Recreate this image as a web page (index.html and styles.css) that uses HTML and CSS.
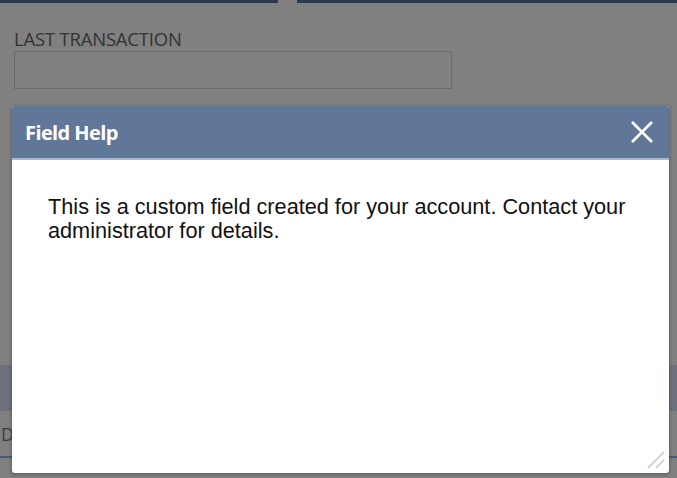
FILE: index.html
```html
<!DOCTYPE html>
<html lang="en">
<head>
    <meta charset="UTF-8">
    <meta name="viewport" content="width=device-width, initial-scale=1.0">
    <title>Field Help</title>
    <link rel="stylesheet" href="styles.css">
</head>
<body>
    <div class="page">
        <div class="tabs">
            <div class="tab tab-left"></div>
            <div class="tab tab-right"></div>
        </div>

        <div class="field">
            <label for="last-transaction">LAST TRANSACTION</label>
            <div class="field-box" id="last-transaction"></div>
        </div>

        <div class="section-bar"></div>
        <div class="list-row">
            <span class="list-cell">DATE</span>
        </div>
    </div>

    <!-- Field Help popup -->
    <div class="dialog">
        <div class="dialog-header">
            <h2>Field Help</h2>
            <button type="button" class="close-btn" aria-label="Close">
                <svg width="24" height="24" viewBox="0 0 24 24">
                    <path d="M2 2 L22 22 M22 2 L2 22" stroke="#fff" stroke-width="2.6" fill="none"/>
                </svg>
            </button>
        </div>
        <div class="dialog-body">
            <p>This is a custom field created for your account. Contact your administrator for details.</p>
        </div>
        <svg class="grip" width="22" height="22" viewBox="0 0 22 22">
            <path d="M20 4 L4 20 M20 12 L12 20" stroke="#c8c8c8" stroke-width="1.6" fill="none"/>
        </svg>
    </div>
</body>
</html>
```

FILE: styles.css
```css
body {
    margin: 0;
    background-color: #808080;
    font-family: "Open Sans", Arial, sans-serif;
    overflow: hidden;
}
.page {
    height: 478px;
    display: flex;
    flex-direction: column;
}
.tabs {
    display: flex;
    gap: 19px;
    height: 3px;
}
.tab {
    background: #2e3950;
}
.tab-left {
    width: 278px;
}
.tab-right {
    flex: 1;
}
.field {
    padding: 23px 0 0 14px;
}
.field label {
    display: block;
    font-size: 18.5px;
    color: #333;
    line-height: 25px;
    letter-spacing: -0.2px;
}
.field-box {
    width: 436px;
    height: 36px;
    border: 1px solid #6b6b6b;
}
.section-bar {
    margin-top: 276px;
    height: 46px;
    background: #6c717d;
}
.list-row {
    height: 45px;
    border-bottom: 2px solid #4b5a7b;
    display: flex;
    align-items: center;
    padding-left: 1px;
}
.list-cell {
    font-size: 18px;
    color: #3d3d3d;
}
.dialog {
    position: absolute;
    left: 12px;
    top: 106px;
    width: 657px;
    height: 367px;
    background: #fff;
    border-radius: 3px;
    box-shadow: 0 1px 4px rgba(0, 0, 0, 0.35);
    overflow: hidden;
}
.dialog-header {
    height: 52px;
    background: #61779a;
    border-bottom: 2px solid #a9bad0;
    display: flex;
    align-items: center;
    justify-content: space-between;
    padding: 0 15px 0 13px;
}
.dialog-header h2 {
    margin: 0;
    color: #fff;
    font-size: 20px;
    font-weight: 700;
    letter-spacing: -0.6px;
}
.close-btn {
    background: none;
    border: none;
    padding: 0;
    cursor: pointer;
    display: flex;
}
.dialog-body {
    padding: 35px 30px 0 36px;
}
.dialog-body p {
    margin: 0;
    font-family: "Liberation Sans", Arial, sans-serif;
    font-size: 21.7px;
    line-height: 24px;
    color: #111;
}
.grip {
    position: absolute;
    right: 3px;
    bottom: 3px;
}
```
